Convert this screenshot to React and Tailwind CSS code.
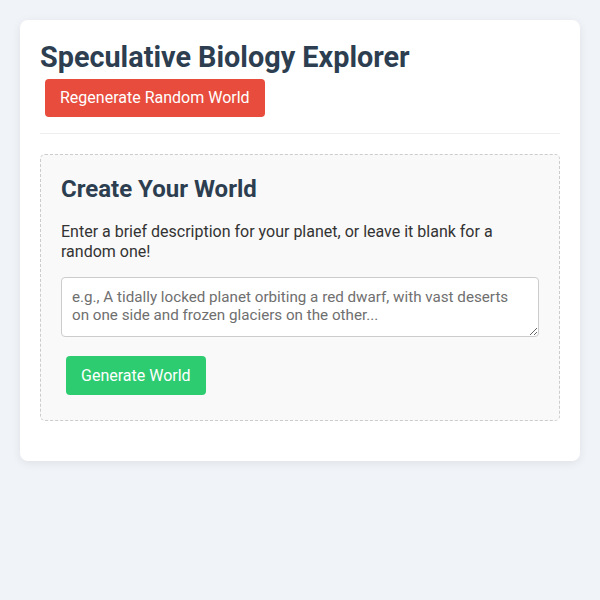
export default function App() {
  return (
    <div className="min-h-[600px] bg-[#f0f4f8] p-5 font-['Roboto',sans-serif] text-[#333]">
      <div className="rounded-lg bg-white p-5 shadow-[0_2px_10px_rgba(0,0,0,0.08)]">
        <header className="border-b border-[#eee] pb-[11px]">
          <h1 className="text-[28.8px] font-bold leading-[34px] text-[#2c3e50]">
            Speculative Biology Explorer
          </h1>
          <button className="m-[5px] rounded bg-[#e74c3c] px-[15px] py-[10px] text-base leading-[18px] text-white">
            Regenerate Random World
          </button>
        </header>

        <section className="mt-5 mb-5 rounded-[5px] border border-dashed border-[#ccc] bg-[#f9f9f9] p-5">
          <h2 className="text-2xl font-bold leading-7 text-[#2c3e50]">Create Your World</h2>
          <p className="mt-[19px] text-base leading-5 text-[#333]">
            Enter a brief description for your planet, or leave it blank for a random one!
          </p>
          <textarea
            className="mt-[15px] block h-[60px] w-full resize-y rounded border border-[#ccc] bg-white p-[10px] text-[15.2px] leading-[18px] text-[#333] placeholder:text-[#6f6f6f]"
            placeholder="e.g., A tidally locked planet orbiting a red dwarf, with vast deserts on one side and frozen glaciers on the other..."
          />
          <button className="m-[5px] mt-[19px] rounded bg-[#2ecc71] px-[15px] py-[10px] text-base leading-[19px] text-white">
            Generate World
          </button>
        </section>
      </div>
    </div>
  );
}
